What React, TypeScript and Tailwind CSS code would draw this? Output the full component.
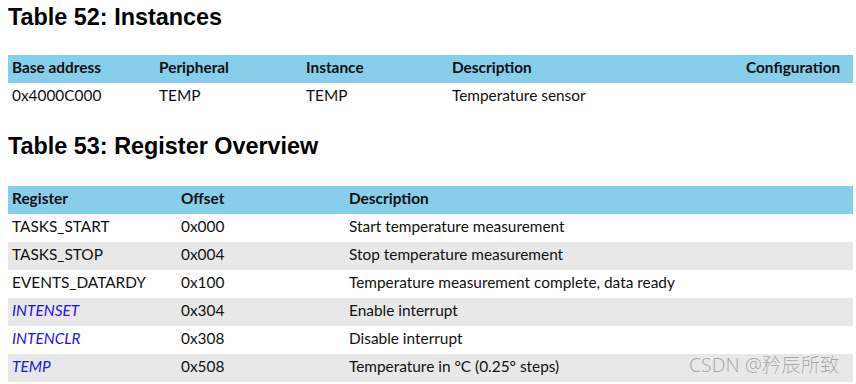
const body = { fontFamily: 'Lato, "Noto Sans", sans-serif' };
const head = { fontFamily: '"Liberation Sans", Arial, sans-serif' };

const instCols = ['Base address', 'Peripheral', 'Instance', 'Description', 'Configuration'];
const instRow = ['0x4000C000', 'TEMP', 'TEMP', 'Temperature sensor', ''];

const registers = [
  { name: 'TASKS_START', offset: '0x000', desc: 'Start temperature measurement', link: false },
  { name: 'TASKS_STOP', offset: '0x004', desc: 'Stop temperature measurement', link: false },
  { name: 'EVENTS_DATARDY', offset: '0x100', desc: 'Temperature measurement complete, data ready', link: false },
  { name: 'INTENSET', offset: '0x304', desc: 'Enable interrupt', link: true },
  { name: 'INTENCLR', offset: '0x308', desc: 'Disable interrupt', link: true },
  { name: 'TEMP', offset: '0x508', desc: 'Temperature in °C (0.25° steps)', link: true },
];

const instGrid = 'grid grid-cols-[147px_147px_146px_294px_1fr]';
const regGrid = 'grid grid-cols-[169px_168px_1fr]';

export default function App() {
  return (
    <div className="relative w-[856px] h-[384px] overflow-hidden bg-white text-[#111] pl-2 pr-[3px]" style={body}>
      <h1 className="mt-[3px] text-[23.4px] leading-[28px] font-bold text-black" style={head}>
        Table 52: Instances
      </h1>

      <div className="mt-[24px] text-[15.4px]">
        <div className={`${instGrid} h-7 bg-[#87ceeb] font-bold`}>
          {instCols.map((c) => (
            <div key={c} className="px-1 leading-[24px] whitespace-nowrap">{c}</div>
          ))}
        </div>
        <div className={`${instGrid} h-7`}>
          {instRow.map((c, i) => (
            <div key={i} className="px-1 leading-[25px]">{c}</div>
          ))}
        </div>
      </div>

      <h1 className="mt-[21px] text-[23.4px] leading-[28px] font-bold text-black" style={head}>
        Table 53: Register Overview
      </h1>

      <div className="mt-[26px] text-[15.4px]">
        <div className={`${regGrid} h-7 bg-[#87ceeb] font-bold`}>
          <div className="px-1 leading-[24px]">Register</div>
          <div className="px-1 leading-[24px]">Offset</div>
          <div className="px-1 leading-[24px]">Description</div>
        </div>
        {registers.map((r, i) => (
          <div key={r.name} className={`${regGrid} h-7 ${i % 2 === 1 ? 'bg-[#e8e8e8]' : 'bg-white'}`}>
            <div className={`px-1 leading-[25px] ${r.link ? 'italic text-[#2414f0]' : ''}`}>{r.name}</div>
            <div className="px-1 leading-[25px]">{r.offset}</div>
            <div className="px-1 leading-[25px]">{r.desc}</div>
          </div>
        ))}
      </div>

      <div
        className="absolute left-[689px] top-[351px] text-[19.4px] leading-[28px] font-light text-[#a6a6a6] [text-shadow:0_0_1px_#ffffff]"
        style={{ fontFamily: '"Noto Sans", "Noto Sans CJK SC", sans-serif' }}
      >
        CSDN @矜辰所致
      </div>
    </div>
  );
}
